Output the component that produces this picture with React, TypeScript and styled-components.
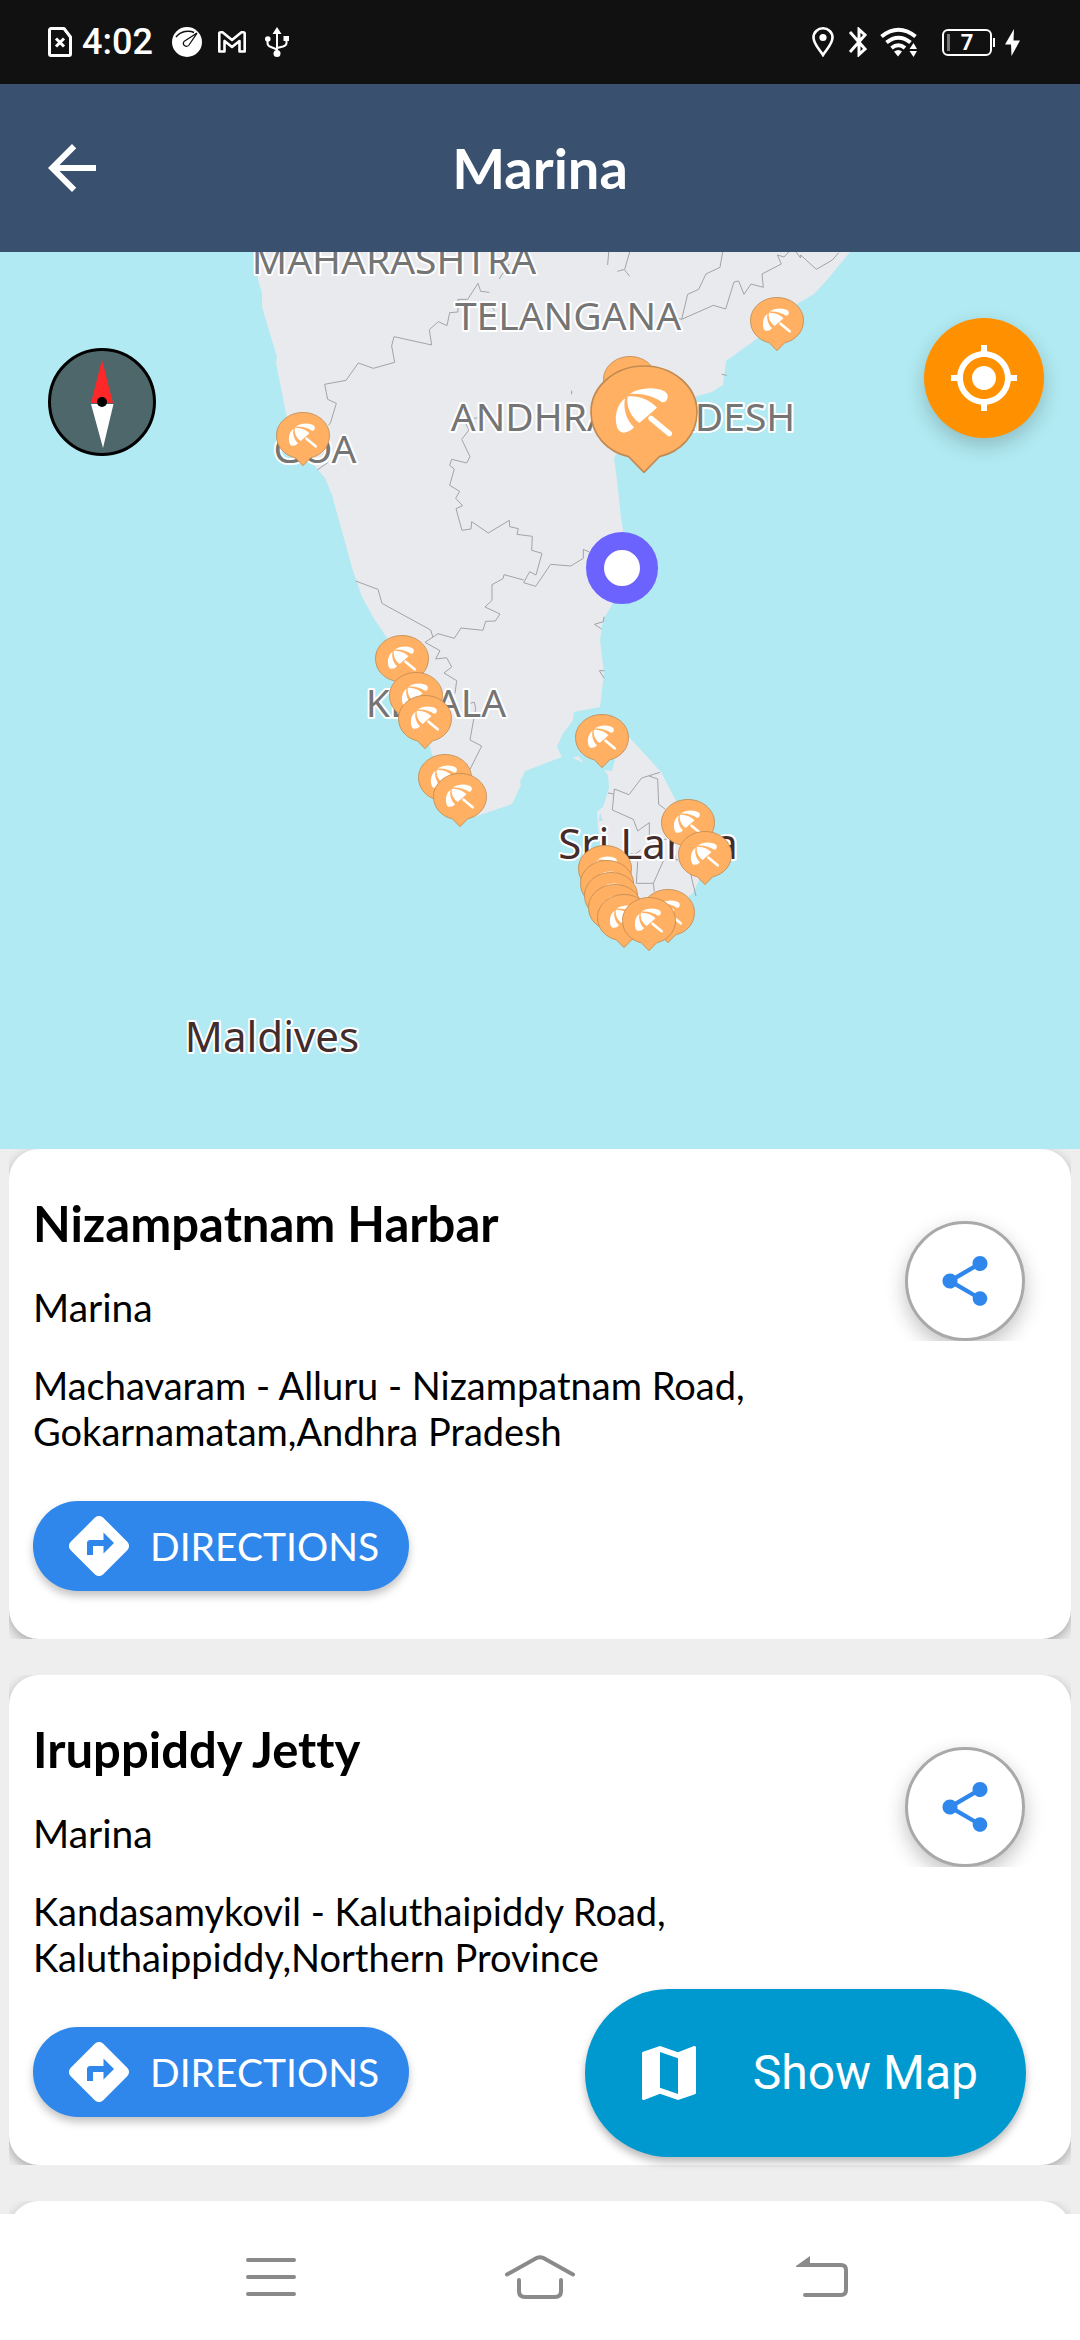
import React from "react";
import styled, { createGlobalStyle } from "styled-components";
import { MdDirections, MdMap, MdMyLocation, MdShare, MdArrowBack } from "react-icons/md";

const GlobalStyle = createGlobalStyle`
  * { box-sizing: border-box; }
  body {
    margin: 0;
    background: #eee;
    font-family: Lato, "Liberation Sans", sans-serif;
    font-variant-ligatures: none;
  }
  h1, h2, p, ul { margin: 0; padding: 0; }
  button { border: 0; padding: 0; font: inherit; cursor: pointer; }
  svg { display: block; }
`;

const Screen = styled.div`
  display: flex;
  flex-direction: column;
  height: 100vh;
  overflow: hidden;
`;

const StatusBar = styled.div`
  display: flex;
  flex: none;
  align-items: center;
  justify-content: space-between;
  height: 84px;
  padding: 0 60px 0 48px;
  background: #111;
  color: #fff;
`;

const StatusGroup = styled.div<{ $gap: number }>`
  display: flex;
  align-items: center;
  gap: ${(p) => p.$gap}px;
`;

const Clock = styled.time`
  margin: 0 3px 0 -6px;
  font: 500 36px/44px Roboto, sans-serif;
`;

const Header = styled.header`
  display: grid;
  flex: none;
  grid-template-columns: 72px 1fr 72px;
  align-items: center;
  height: 168px;
  padding: 0 36px;
  background: #39516e;
  color: #fff;
`;

const BackButton = styled.button`
  background: none;
  color: inherit;
`;

const ScreenTitle = styled.h1`
  font-size: 56px;
  font-weight: 700;
  line-height: 64px;
  text-align: center;
`;

const MapPanel = styled.section`
  position: relative;
  flex: none;
  height: 897px;
  background: #b1eaf2;
`;

const MapDrawing = styled.svg`
  width: 100%;
  height: 100%;
`;

const MapLabel = styled.text<{ $country?: boolean }>`
  font-family: "Noto Sans", sans-serif;
  font-size: ${(p) => (p.$country ? 42 : 39)}px;
  fill: ${(p) => (p.$country ? "#432c2c" : "#757575")};
  stroke: #fff;
  stroke-width: 4px;
  stroke-linejoin: round;
  paint-order: stroke;
`;

const CompassButton = styled.button`
  position: absolute;
  top: 96px;
  left: 48px;
  background: none;
`;

const LocateButton = styled.button`
  position: absolute;
  top: 66px;
  right: 36px;
  display: grid;
  place-items: center;
  width: 120px;
  height: 120px;
  border-radius: 50%;
  background: #ff9100;
  color: #fff;
  box-shadow: 0 8px 20px rgba(0, 0, 0, 0.2);
`;

const Results = styled.main`
  position: relative;
  flex: 1;
  min-height: 0;
  overflow: hidden;
`;

const PlaceList = styled.ul`
  display: flex;
  flex-direction: column;
  gap: 36px;
  padding: 0 9px;
  list-style: none;
`;

const CardSlot = styled.li`
  overflow: hidden;
`;

const Card = styled.article`
  display: flex;
  align-items: flex-start;
  justify-content: space-between;
  min-height: 490px;
  padding: 45px 24px 48px;
  border-radius: 30px;
  background: #fff;
  color: #000;
  box-shadow: 0 4px 12px rgba(0, 0, 0, 0.3);
`;

const CardBody = styled.div`
  display: flex;
  flex-direction: column;
  align-items: flex-start;
`;

const PlaceName = styled.h2`
  margin-bottom: 32px;
  font-size: 49px;
  font-weight: 700;
  line-height: 58px;
`;

const PlaceKind = styled.p`
  margin-bottom: 32px;
  font-size: 39px;
  line-height: 46px;
`;

const PlaceAddress = styled.p`
  margin-bottom: 47px;
  font-size: 38px;
  line-height: 46px;
`;

const DirectionsButton = styled.button`
  display: flex;
  align-items: center;
  gap: 15px;
  height: 90px;
  padding: 0 30px;
  border-radius: 45px;
  background: #2f87ec;
  color: #fff;
  font-size: 39px;
  line-height: 46px;
  box-shadow: 0 5px 8px rgba(0, 0, 0, 0.24);
`;

const ShareSlot = styled.div`
  margin: 27px 22px 0 0;
  clip-path: inset(-40px -40px 0 -40px);
`;

const ShareButton = styled.button`
  display: grid;
  place-items: center;
  width: 120px;
  height: 120px;
  border: 3px solid #a9a9a9;
  border-radius: 50%;
  background: #fff;
  color: #2f87ec;
  box-shadow: 0 8px 20px rgba(0, 0, 0, 0.24);
`;

const ShowMapButton = styled.button`
  position: absolute;
  right: 54px;
  bottom: 57px;
  display: flex;
  align-items: center;
  gap: 48px;
  height: 168px;
  padding: 0 48px;
  border-radius: 84px;
  background: #0099cf;
  color: #fff;
  font: 400 48px/56px Roboto, sans-serif;
  box-shadow: 0 5px 8px rgba(0, 0, 0, 0.28);
`;

const NavBar = styled.nav`
  display: flex;
  flex: none;
  align-items: center;
  justify-content: space-between;
  height: 126px;
  padding: 0 228px;
  background: #fff;
  color: #8a8a8a;
`;

const NavButton = styled.button`
  display: grid;
  place-items: center;
  width: 86px;
  height: 86px;
  background: none;
  color: inherit;
`;

const stroke = { fill: "none", stroke: "currentColor" } as const;

const SimIcon = () => (
  <svg width="24" height="30" viewBox="0 0 24 30" {...stroke} strokeWidth="3">
    <path d="M3 1.5H16L22.500 10V27a1.500 1.500 0 0 1-1.500 1.500H3A1.500 1.500 0 0 1 1.500 27V3A1.500 1.500 0 0 1 3 1.500Z" strokeLinejoin="round" />
    <path d="M8 11.500l8 8M16 11.500l-8 8" />
  </svg>
);

const GaugeIcon = () => (
  <svg width="30" height="30" viewBox="0 0 30 30">
    <circle cx="15" cy="15" r="15" fill="#fff" />
    <path d="M4 10C9 4 17 3 22 5.500M24.500 6.500L17 17" fill="none" stroke="#111" strokeWidth="1.500" />
    <path d="M25 6L12 14.500a3 3 0 0 0 5 3.500Z" fill="#fff" stroke="#111" strokeWidth="1.200" />
  </svg>
);

const MailIcon = () => (
  <svg width="28" height="22" viewBox="0 0 28 22" {...stroke} strokeWidth="2.600" strokeLinejoin="round">
    <path d="M1.300 20.500V2.500Q1.300 1.300 2.800 1.300H4.500L14 9L23.500 1.300H25.200Q26.700 1.300 26.700 2.500V20.500H21.500V10L14 16L6.500 10V20.500Z" />
  </svg>
);

const UsbIcon = () => (
  <svg width="27" height="30" viewBox="-3 0 27 30" {...stroke} strokeWidth="2">
    <path d="M12 5V26M2.500 12V16Q2.500 19 6 20L12 22.500M21.500 12V16Q21.500 18.500 18 19.500L12 21" />
    <path d="M12 0L16.500 7H7.500ZM18.500 9H24V14H18.500Z" fill="currentColor" stroke="none" />
    <circle cx="2.800" cy="12" r="2.800" fill="currentColor" stroke="none" />
    <circle cx="12" cy="26.500" r="3.500" fill="currentColor" stroke="none" />
  </svg>
);

const PlaceIcon = () => (
  <svg width="22" height="30" viewBox="0 0 22 30" {...stroke} strokeWidth="2.600">
    <path d="M11 28C8 23 1.500 17 1.500 10.500a9.500 9.200 0 0 1 19 0C20.500 17 14 23 11 28Z" />
    <circle cx="11" cy="10.500" r="3.600" fill="currentColor" stroke="none" />
  </svg>
);

const BluetoothIcon = () => (
  <svg width="20" height="30" viewBox="-2 0 20 30" {...stroke} strokeWidth="3">
    <path d="M1 5L16 22L10 27.500V2.500L16 8L1 25" />
  </svg>
);

const WifiIcon = () => (
  <svg width="37" height="30" viewBox="0 0 37 30">
    <g {...stroke} strokeWidth="4">
      <path d="M1.500 9.500Q18.500 -4 35.500 9.500M6.500 15.500Q18.500 6 30.500 15.500M11.500 21Q18.500 15.500 25 21" />
    </g>
    <path d="M14 24.500Q18.500 21.500 22 24.500L18 29.500ZM29.500 22L33.500 16L37 22ZM29.500 24L33.500 30L37 24Z" fill="currentColor" />
  </svg>
);

const BatteryShell = styled.span`
  position: relative;
  display: grid;
  place-items: center;
  width: 50px;
  height: 27px;
  margin-left: 12px;
  border: 2px solid #fff;
  border-radius: 6px;
  font: 700 22px/23px Roboto, sans-serif;

  &::before {
    content: "";
    position: absolute;
    top: 3px;
    left: 3px;
    width: 3px;
    height: 17px;
    background: #777;
  }

  &::after {
    content: "";
    position: absolute;
    top: 7px;
    right: -5px;
    width: 2px;
    height: 9px;
    background: #fff;
  }
`;

const BoltIcon = () => (
  <svg width="15" height="27" viewBox="0 0 15 27">
    <path d="M9 0L0 15.500H6L6.500 27L15 11.500H8.500Z" fill="currentColor" />
  </svg>
);

const MenuIcon = () => (
  <svg width="50" height="40" viewBox="0 0 50 40" {...stroke} strokeWidth="4" strokeLinecap="round">
    <path d="M2 3H48M2 20H48M2 37H48" />
  </svg>
);

const HomeIcon = () => (
  <svg width="70" height="44" viewBox="0 0 70 44" {...stroke} strokeWidth="4" strokeLinecap="round">
    <path d="M2 19.500L32 2.800Q35 1.500 38 2.800L68 19.500M14 25V36Q14 42 20 42H50Q56 42 56 36V25" />
  </svg>
);

const ReturnIcon = () => (
  <svg width="78" height="42" viewBox="-26 0 78 42">
    <path d="M10 9H45Q50 9 50 14V34Q50 39 45 39H9" {...stroke} strokeWidth="4" strokeLinecap="round" />
    <path d="M0 10L14 0V11H0Z" fill="currentColor" />
  </svg>
);

const Compass = () => (
  <svg width="108" height="108" viewBox="0 0 108 108">
    <circle cx="54" cy="54" r="52.500" fill="#4e676b" stroke="#000" strokeWidth="3" />
    <path d="M54 12L65 55H43Z" fill="#ff2828" />
    <path d="M43 56H65.500L55 100Z" fill="#fff" />
    <circle cx="54" cy="54" r="5" fill="#000" />
  </svg>
);

const UmbrellaPin = () => (
  <symbol id="umbrella-pin" viewBox="0 0 324 324">
    <path
      d="M162 322L116 275C52 260 3 210 3 141C3 65 74 3 162 3S321 65 321 141C321 210 272 260 208 275Z"
      fill="#ffb062"
      stroke="#c08a52"
      strokeWidth="5"
    />
    <path d="M105 100C82 118 74 148 79 178Q83 203 101 203Q120 202 132 187C108 165 99 130 105 100Z" fill="#fff" />
    <path d="M113 94C150 92 180 106 201 128L148 174C122 155 108 125 113 94Z" fill="#fff" />
    <path d="M118 87C145 70 180 64 215 75Q235 82 233 97Q231 113 216 112C192 94 155 84 118 87Z" fill="#fff" />
    <path d="M183 160L238 206" stroke="#fff" strokeWidth="16" strokeLinecap="round" />
  </symbol>
);

const pins = [
  [276, 412, 54], [750, 297, 54], [603, 356, 54], [590, 365, 108],
  [375, 635, 54], [389, 672, 54], [398, 695, 54], [418, 754, 54], [433, 773, 54],
  [575, 714, 54], [661, 799, 54], [678, 831, 54],
  [578, 845, 54], [580, 860, 54], [584, 872, 54], [588, 884, 54], [597, 894, 54],
  [641, 889, 54], [622, 897, 54],
];

const labels = [
  { x: 394, y: 274, text: "MAHARASHTRA" },
  { x: 568, y: 330, text: "TELANGANA" },
  { x: 623, y: 431, text: "ANDHRA PRADESH" },
  { x: 315, y: 463, text: "GOA" },
  { x: 436, y: 717, text: "KERALA" },
  { x: 648, y: 859, text: "Sri Lanka", country: true },
  { x: 272, y: 1052, text: "Maldives", country: true },
];

const CoastMap = () => (
  <MapDrawing viewBox="0 252 1080 897" preserveAspectRatio="xMidYMid slice" role="img" aria-label="Map of marinas">
    <UmbrellaPin />
    <g fill="#e9eaee">
      <path d="M255 252L258 280L262 293V307L277 357L276 363L286 413L292 440L303 457L313 464L325 478L332 495L338 517L345 542L352 568L362 597L373 617L387 638L405 690L430 747L434 760L448 795L460 820L477 816L512 804L521 785L520 782L525 771L562 757L557 747L562 735L573 720L574 712L600 707L604 673L600 640L603 620L613 603L623 575V530L621 518L617 480L614 458L617 453L650 420L697 396L712 392L723 385L726 361L758 338L780 315L797 304L814 294L827 280L850 252Z" />
      <path d="M629 737L661 772L674 797L690 830L700 878L693 893L688 897L667 915L640 918L620 905L604 870L598 827L597 812L603 807L609 788L608 775L604 770L612 771L615 760L600 740L610 728Z" />
      <path d="M573 758L578 756L584 763Z" />
    </g>
    <path d="M600 812L603 821H599Z" fill="#b1eaf2" />
    <g fill="none" stroke="#a3a3a6" strokeWidth="3">
      <path
        transform="translate(200 240) scale(.33333)"
        d="M928 72L905 105L898 117M868 157L842 154L834 130L803 178H774V216L749 218L741 257L715 245L688 269L695 315L582 290L575 318L584 367L520 385L475 369L438 421L374 433L383 478L409 490L391 550L385 555M383 668L352 690M797 550L807 570L785 598L810 650L800 669L755 658L749 676L763 687L749 736L779 754L767 775L788 797L768 806L786 871L813 867L815 845L865 879L928 841L929 860L955 866L951 883L997 889L995 931L1026 940L1008 1005L989 995L971 1028L1007 1039L1052 973L1112 978L1150 955V928L1168 936M971 1020L912 1004L909 1016L876 1034V1081L855 1101L900 1122L886 1143L857 1144L849 1171L783 1164L763 1195L714 1181L675 1207M467 1023L534 1048L546 1090L692 1170L699 1192M1115 452V463M822 535L858 530M874 200L884 212"
      />
      <path
        transform="translate(560 240) scale(.33333)"
        d="M146 36L143 75M209 36L194 88L172 94M194 90L209 109M488 36L480 82L438 102L416 148L383 163L365 238L352 235M365 238L460 196L497 207L522 126L536 123L552 163L573 132L610 142L606 102L664 72L652 45L672 51L686 36M708 36L722 54V45L769 88L817 60L836 38M485 403L500 406"
      />
      <path
        transform="translate(320 560) scale(.33333)"
        d="M315 247L360 272L347 297L380 293L395 321L372 339L410 362L405 400M448 430L463 427L467 445L450 540L485 558L450 628M852 170L850 185L823 193L845 207M853 332H838L853 355"
      />
      <path
        transform="translate(500 660) scale(.33333)"
        d="M480 337L425 354L387 404L343 387L337 450L400 478L413 513L448 488V525M324 399L341 402M447 348L473 357L476 433L495 447M410 605L413 607L409 670H460L490 603M460 670L463 695M390 580L405 583L422 570M485 538H500M572 640L578 668L588 708M523 580L528 600H535"
      />
    </g>
    {labels.map((l) => (
      <MapLabel key={l.text} x={l.x} y={l.y} textAnchor="middle" $country={l.country}>
        {l.text}
      </MapLabel>
    ))}
    {pins.map(([x, y, size]) => (
      <use key={`${x}-${y}`} href="#umbrella-pin" x={x} y={y} width={size} height={size} />
    ))}
    <circle cx="622" cy="568" r="27" fill="#fff" stroke="#6c63ff" strokeWidth="18" />
  </MapDrawing>
);

const places = [
  {
    name: "Nizampatnam Harbar",
    kind: "Marina",
    address: ["Machavaram - Alluru - Nizampatnam Road,", "Gokarnamatam,Andhra Pradesh"],
  },
  {
    name: "Iruppiddy Jetty",
    kind: "Marina",
    address: ["Kandasamykovil - Kaluthaipiddy Road,", "Kaluthaippiddy,Northern Province"],
  },
];

export default function App() {
  return (
    <Screen>
      <GlobalStyle />
      <StatusBar>
        <StatusGroup $gap={16}>
          <SimIcon />
          <Clock>4:02</Clock>
          <GaugeIcon />
          <MailIcon />
          <UsbIcon />
        </StatusGroup>
        <StatusGroup $gap={13}>
          <PlaceIcon />
          <BluetoothIcon />
          <WifiIcon />
          <BatteryShell>7</BatteryShell>
          <BoltIcon />
        </StatusGroup>
      </StatusBar>
      <Header>
        <BackButton aria-label="Back">
          <MdArrowBack size={72} />
        </BackButton>
        <ScreenTitle>Marina</ScreenTitle>
      </Header>
      <MapPanel>
        <CoastMap />
        <CompassButton aria-label="Reset north">
          <Compass />
        </CompassButton>
        <LocateButton aria-label="My location">
          <MdMyLocation size={72} />
        </LocateButton>
      </MapPanel>
      <Results>
        <PlaceList>
          {places.map((place) => (
            <CardSlot key={place.name}>
              <Card>
                <CardBody>
                  <PlaceName>{place.name}</PlaceName>
                  <PlaceKind>{place.kind}</PlaceKind>
                  <PlaceAddress>
                    {place.address[0]}
                    <br />
                    {place.address[1]}
                  </PlaceAddress>
                  <DirectionsButton>
                    <MdDirections size={72} />
                    DIRECTIONS
                  </DirectionsButton>
                </CardBody>
                <ShareSlot>
                  <ShareButton aria-label={`Share ${place.name}`}>
                    <MdShare size={60} />
                  </ShareButton>
                </ShareSlot>
              </Card>
            </CardSlot>
          ))}
          <CardSlot>
            <Card />
          </CardSlot>
        </PlaceList>
        <ShowMapButton>
          <MdMap size={72} />
          Show Map
        </ShowMapButton>
      </Results>
      <NavBar>
        <NavButton aria-label="Recent apps">
          <MenuIcon />
        </NavButton>
        <NavButton aria-label="Home">
          <HomeIcon />
        </NavButton>
        <NavButton aria-label="Return">
          <ReturnIcon />
        </NavButton>
      </NavBar>
    </Screen>
  );
}
